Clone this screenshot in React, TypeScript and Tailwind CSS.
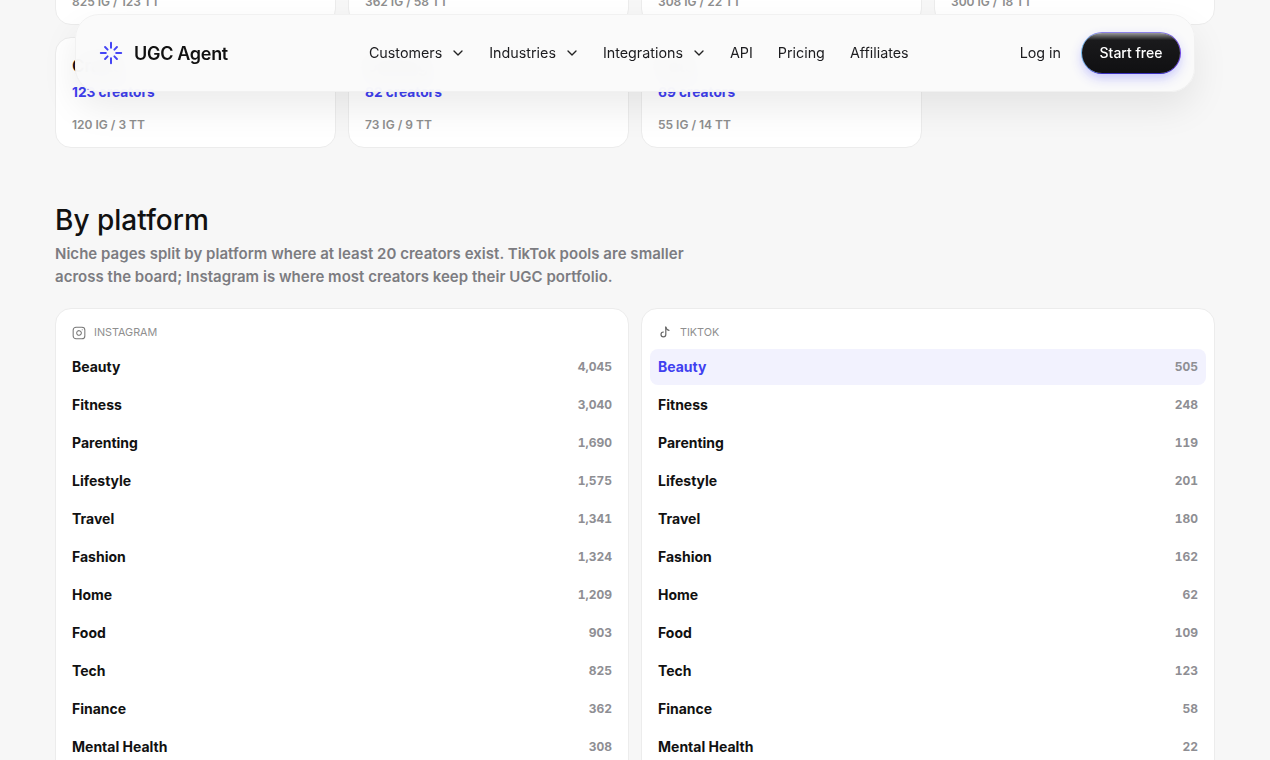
import React from "react";
import { ChevronDown, Instagram } from "lucide-react";

const cards = [
  ["Tech", "948 creators", "825 IG / 123 TT"],
  ["Finance", "420 creators", "362 IG / 58 TT"],
  ["Mental Health", "330 creators", "308 IG / 22 TT"],
  ["Wellness", "318 creators", "300 IG / 18 TT"],
  ["Crafts", "123 creators", "120 IG / 3 TT"],
  ["Gaming", "82 creators", "73 IG / 9 TT"],
  ["Pets", "69 creators", "55 IG / 14 TT"],
];

const names = ["Beauty", "Fitness", "Parenting", "Lifestyle", "Travel", "Fashion", "Home", "Food", "Tech", "Finance", "Mental Health"];
const ig = ["4,045", "3,040", "1,690", "1,575", "1,341", "1,324", "1,209", "903", "825", "362", "308"];
const tt = ["505", "248", "119", "201", "180", "162", "62", "109", "123", "58", "22"];

function Logo() {
  const rays = [0, 45, 90, 135, 180, 225, 270, 315];
  return (
    <svg width="24" height="24" viewBox="0 0 24 24" fill="none" stroke="#4545f5" strokeLinecap="round" strokeWidth="2">
      {rays.map((r) => (
        <line key={r} x1="12" y1={r % 90 === 0 ? 1.8 : 3.6} x2="12" y2={r % 90 === 0 ? 6.8 : 7.2} transform={`rotate(${r} 12 12)`} />
      ))}
    </svg>
  );
}

function TikTok() {
  return (
    <svg width="13" height="13" viewBox="0 0 13 13" fill="none" stroke="#666" strokeWidth="1.2" strokeLinecap="round" strokeLinejoin="round" className="ml-[1px] mb-[2px]">
      <path d="M6.8 1.2v7.2a2.4 2.4 0 1 1-2.4-2.4" />
      <path d="M6.8 1.2c.3 1.7 1.5 2.9 3.2 3.1" />
    </svg>
  );
}

function NavItem({ label, menu }: { label: string; menu?: boolean }) {
  return (
    <div className="flex items-center gap-[8px] text-[14.3px] text-[#1c1c1f]">
      <span>{label}</span>
      {menu && <ChevronDown size={16} strokeWidth={2} className="text-[#222] -mr-[2px]" />}
    </div>
  );
}

function Panel({ title, icon, counts, active }: { title: string; icon: React.ReactNode; counts: string[]; active?: number }) {
  return (
    <div className="bg-white rounded-[16px] border border-[#ececec] p-2 pb-10">
      <div className="flex items-center h-[32px] px-2 gap-[8px] text-[10.8px] text-[#8f8f8f] leading-none">
        {icon}
        <span className="uppercase">{title}</span>
      </div>
      <div className="flex flex-col gap-[2px]">
        {names.map((n, i) => (
          <div key={n} className={`flex items-center justify-between h-[36px] px-2 rounded-[8px] ${i === active ? "bg-[#f2f2fe]" : ""}`}>
            <span className={`mb-[2px] text-[14px] font-bold ${i === active ? "text-[#4040f0]" : "text-[#111]"}`}>{n}</span>
            <span className="text-[12px] font-bold tabular-nums text-[#8e8e93]">{counts[i]}</span>
          </div>
        ))}
      </div>
    </div>
  );
}

export default function App() {
  return (
    <div className="relative h-[760px] overflow-hidden bg-[#f7f7f7] font-['Inter',sans-serif]">
      <div className="mx-[55px] mt-[-86px]">
        <div className="grid grid-cols-4 gap-3">
          {cards.map(([t, c, s]) => (
            <div key={s} className="h-[111px] bg-white rounded-[16px] border border-[#ececec] px-4 pt-[16px]">
              <div className="text-[17px] font-semibold text-[#111] leading-[24px]">{t}</div>
              <div className="text-[13.7px] font-bold text-[#4040f0] leading-[20px] mt-[4px]">{c}</div>
              <div className="text-[12px] font-semibold text-[#8e8e8e] leading-[16px] mt-[15px]">{s}</div>
            </div>
          ))}
        </div>
        <h2 className="mt-[54px] text-[28px] font-medium leading-[36px] text-[#111]">By platform</h2>
        <p className="mt-[4px] max-w-[640px] text-[15px] font-semibold tracking-[0.03px] leading-[23px] text-[#7c7c81]">
          Niche pages split by platform where at least 20 creators exist. TikTok pools are smaller across the board; Instagram is where most creators keep their UGC portfolio.
        </p>
        <div className="grid grid-cols-2 gap-3 mt-[20px]">
          <Panel title="Instagram" counts={ig} icon={<Instagram size={14} strokeWidth={1.8} className="text-[#777]" />} />
          <Panel title="TikTok" counts={tt} active={0} icon={<TikTok />} />
        </div>
      </div>

      <header className="absolute left-[75px] top-[14px] w-[1120px] h-[78px] rounded-[24px] bg-[#fafafa]/95 backdrop-blur-md border border-[#f1f1f1] shadow-[0_16px_36px_rgba(0,0,0,0.08)] flex items-center pl-[23px] pr-[14px]">
        <div className="flex items-center gap-[11px]">
          <Logo />
          <span className="text-[18px] font-semibold text-[#111] tracking-[-0.3px]">UGC Agent</span>
        </div>
        <nav className="flex items-center gap-[25px] ml-[141px]">
          <NavItem label="Customers" menu />
          <NavItem label="Industries" menu />
          <NavItem label="Integrations" menu />
          <NavItem label="API" />
          <NavItem label="Pricing" />
          <NavItem label="Affiliates" />
        </nav>
        <div className="ml-auto flex items-center gap-[21px]">
          <NavItem label="Log in" />
          <button className="w-[98px] h-[40px] pb-[2px] rounded-full bg-gradient-to-b from-[#9a9a9a] via-[#1a1a1c] via-[18%] to-[#101012] text-white text-[14px] font-medium shadow-[-1px_0_0_#6fb7e8,1px_0_0_#6a3fe0,0_-1px_0_#8a80e8,0_1px_0_#3a30c0,0_5px_12px_rgba(70,70,255,0.3)]">
            Start free
          </button>
        </div>
      </header>
    </div>
  );
}
